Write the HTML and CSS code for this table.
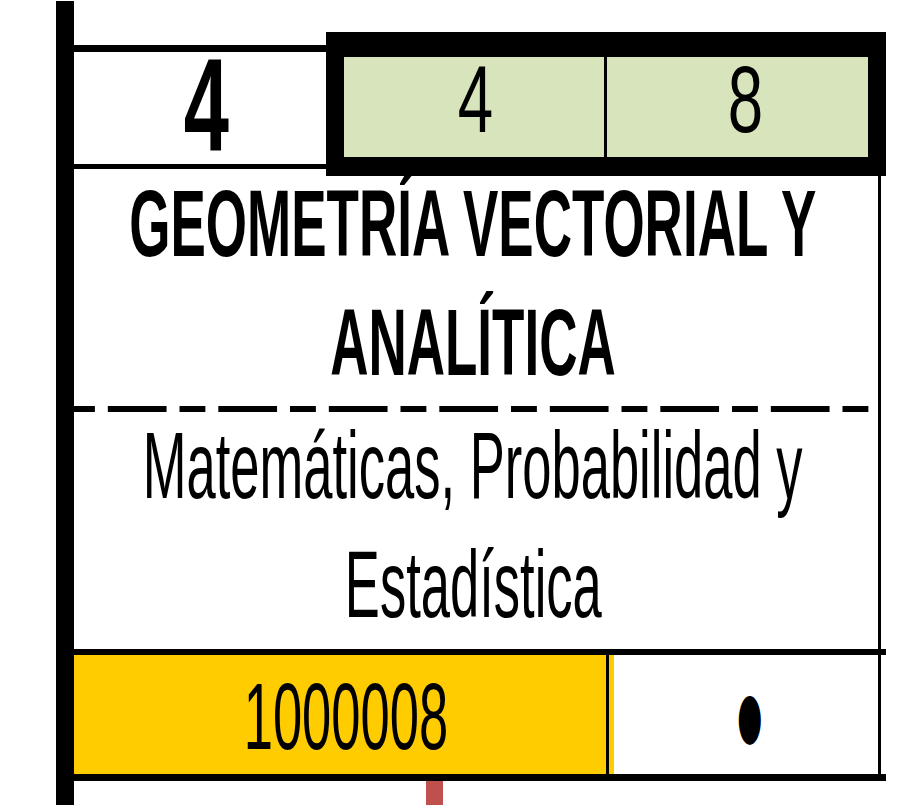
FILE: index.html
```html
<!DOCTYPE html>
<html lang="es">
<head>
<meta charset="utf-8">
<title>Geometría vectorial y analítica</title>
<link rel="stylesheet" href="styles.css">
</head>
<body>
<div class="sheet">
  <div class="top">
    <div class="num-cell"><span class="t t-num">4</span></div>
    <div class="box">
      <div class="gcell"><span class="t t-g">4</span></div>
      <div class="gcell gcell-r"><span class="t t-g">8</span></div>
    </div>
  </div>
  <div class="main">
    <div class="title">
      <div class="lines lines-title">
        <span class="t t-b">GEOMETRÍA VECTORIAL Y</span>
        <span class="t t-b">ANALÍTICA</span>
      </div>
    </div>
    <div class="dash"></div>
    <div class="subject">
      <div class="lines lines-subject">
        <span class="t t-r">Matemáticas, Probabilidad y</span>
        <span class="t t-r">Estadística</span>
      </div>
    </div>
  </div>
  <div class="hline"></div>
  <div class="row">
    <div class="code"><span class="t t-r">1000008</span></div>
    <div class="bullet-cell"><span class="t bullet">●</span></div>
  </div>
  <div class="hline hline-b"></div>
  <div class="marker"></div>
</div>
</body>
</html>
```

FILE: styles.css
```css
* { box-sizing: border-box; }

html, body {
  margin: 0;
  padding: 0;
  background: #fff;
}

body {
  font-family: "Liberation Sans", Arial, sans-serif;
  color: #000;
  overflow: hidden;
}

.sheet {
  margin: 1px 0 0 56px;
  border-left: 18px solid #000;
  width: 830px;
  height: 804px;
}

.t {
  display: block;
  white-space: nowrap;
  transform-origin: 50% 50%;
}

/* top row */
.top {
  display: flex;
  align-items: flex-start;
  height: 175px;
}

.num-cell {
  width: 254px;
  height: 124px;
  margin-top: 44px;
  border-top: 7px solid #000;
  border-bottom: 5px solid #000;
  display: flex;
  justify-content: center;
  padding-left: 13px;
}

.t-num {
  font-size: 131px;
  font-weight: bold;
  line-height: 107px;
  transform: scaleX(0.62);
}

.box {
  margin-top: 31px;
  width: 563px;
  height: 144px;
  border-style: solid;
  border-color: #000;
  border-width: 25px 18px 19px 18px;
  background: #d8e4bc;
  display: flex;
}

.gcell {
  width: 263px;
  border-right: 3px solid #000;
  display: flex;
  justify-content: center;
  padding-left: 2px;
}

.gcell-r {
  width: auto;
  flex: 1;
  border-right: 0;
  padding-left: 15px;
}

.t-g {
  font-size: 95px;
  line-height: 84px;
  transform: scaleX(0.67);
}

/* title / subject */
.main {
  width: 807px;
  border-right: 3px solid #000;
}

.title,
.subject {
  display: flex;
  flex-direction: column;
}

.title {
  height: 230px;
}

.subject {
  height: 237px;
}

.lines {
  display: flex;
  flex-direction: column;
  align-items: center;
  padding-right: 6px;
}

.lines-title {
  margin-top: -12px;
}

.lines-subject {
  margin-top: -6px;
}

.t-b {
  font-size: 95px;
  font-weight: bold;
  line-height: 119px;
  transform: scaleX(0.558);
}

.t-r {
  font-size: 95px;
  line-height: 119px;
  transform: scaleX(0.553);
}

.dash {
  height: 6px;
  background-image: linear-gradient(to right,
    #000 0, #000 26px,
    transparent 26px, transparent 39px,
    #000 39px, #000 98px,
    transparent 98px, transparent 110.5px);
  background-size: 110.5px 6px;
  background-position: -5px 0;
  background-repeat: repeat-x;
}

/* grid lines */
.hline {
  width: 812px;
  height: 6px;
  background: #000;
}

.hline-b {
  height: 7px;
}

/* code row */
.row {
  display: flex;
  width: 807px;
  height: 119px;
}

.code {
  width: 535px;
  background: #ffcc00;
  border-right: 3px solid #000;
  display: flex;
  justify-content: center;
  padding-left: 12px;
  padding-top: 2px;
}

.bullet-cell {
  flex: 1;
  border-right: 3px solid #000;
  box-shadow: inset 5px 0 0 #ffcc00;
  display: flex;
  justify-content: center;
  align-items: center;
  padding-left: 13px;
  padding-top: 1px;
}

.bullet {
  font-family: "DejaVu Sans", sans-serif;
  font-size: 64px;
  line-height: 90px;
  transform: scaleX(0.45);
}

.marker {
  margin-left: 352px;
  width: 17px;
  height: 24px;
  background: #c0504d;
}
```
